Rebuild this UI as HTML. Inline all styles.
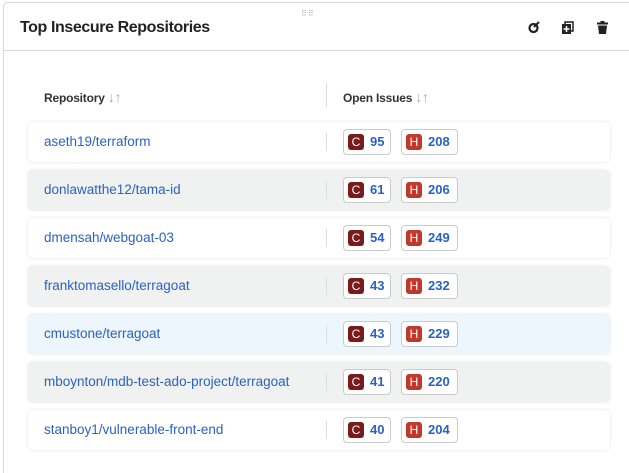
<!DOCTYPE html><html><head><style>
html,body{margin:0;width:629px;height:473px;overflow:hidden}
body{background:#fff;font-family:"Liberation Sans",sans-serif;position:relative}
.card{position:absolute;left:3px;top:2px;width:640px;height:480px;border:1px solid #d9d9d9;border-radius:4px;box-sizing:border-box}
.hdr{position:absolute;left:0;top:0;right:0;height:47px;border-bottom:1px solid #d9d9d9}
.title{position:absolute;left:16px;top:16px;font-size:16px;font-weight:bold;color:#222;letter-spacing:-0.4px}
.dots{position:absolute;color:#aaa;font-size:8px;letter-spacing:1px}
.th{position:absolute;top:89px;font-size:12px;font-weight:bold;color:#333;letter-spacing:-0.2px}
.th span{color:#aaa;font-weight:normal;font-size:14px}
.vline{position:absolute;left:326px;width:1px;background:#ddd}
.row{position:absolute;left:28px;width:582px;height:40px;border-radius:5px;box-shadow:0 0 3px rgba(0,0,0,.12);background:#fff}
.row.g{background:#f0f1f1}.row.b{background:#edf5fd}
.row a{position:absolute;left:16px;top:12px;font-size:13.5px;color:#2a62c2;text-decoration:none}
.row .vl{position:absolute;left:298px;top:11px;width:1px;height:18px;background:#ddd}
.bd{position:absolute;top:7px;height:24px;border:1px solid #ccc;border-radius:4px;background:#fff;font-size:13px;font-weight:bold;color:#2a62c2;line-height:24px}
.bd i{position:absolute;left:4px;top:4px;width:16px;height:16px;border-radius:3px;color:#fff;font-style:normal;font-size:12px;line-height:16px;text-align:center;font-weight:normal}
.bd b{position:absolute;left:26px}
</style></head><body>
<div class="card"><div class="hdr"><div class="title">Top Insecure Repositories</div>
<div class="dots" style="left:297px;top:6px">⠿⠿</div>
<svg style="position:absolute;left:524px;top:18px" width="12" height="12" viewBox="0 0 12 12"><circle cx="5.5" cy="7" r="4" fill="none" stroke="#222" stroke-width="2.2"/><path d="M6 6L11 1" stroke="#222" stroke-width="2"/></svg>
<svg style="position:absolute;left:558px;top:18px" width="12" height="13" viewBox="0 0 12 13"><rect x="0" y="3" width="9" height="10" fill="#222"/><path d="M3 3V1h8v9H9" fill="none" stroke="#222" stroke-width="1.5"/><path d="M4.5 5v6M1.5 8h6" stroke="#fff" stroke-width="1.5"/></svg>
<svg style="position:absolute;left:593px;top:18px" width="11" height="13" viewBox="0 0 11 13"><rect x="0" y="1.5" width="11" height="2" fill="#222"/><rect x="3.5" y="0" width="4" height="2" fill="#222"/><path d="M1 4.5h9l-1 8.5H2z" fill="#222"/></svg>
</div></div>
<div class="th" style="left:44px">Repository <span>↓↑</span></div>
<div class="th" style="left:343px">Open Issues <span>↓↑</span></div>
<div class="vline" style="top:83px;height:24px"></div>
<div class="row" style="top:122px"><a>aseth19/terraform</a><div class="vl"></div><div class="bd" style="left:315px;width:46px"><i style="background:#7a1a1a">C</i><b>95</b></div><div class="bd" style="left:373px;width:55px"><i style="background:#c0392b">H</i><b>208</b></div></div>
<div class="row g" style="top:170px"><a>donlawatthe12/tama-id</a><div class="vl"></div><div class="bd" style="left:315px;width:46px"><i style="background:#7a1a1a">C</i><b>61</b></div><div class="bd" style="left:373px;width:55px"><i style="background:#c0392b">H</i><b>206</b></div></div>
<div class="row" style="top:218px"><a>dmensah/webgoat-03</a><div class="vl"></div><div class="bd" style="left:315px;width:46px"><i style="background:#7a1a1a">C</i><b>54</b></div><div class="bd" style="left:373px;width:55px"><i style="background:#c0392b">H</i><b>249</b></div></div>
<div class="row g" style="top:266px"><a>franktomasello/terragoat</a><div class="vl"></div><div class="bd" style="left:315px;width:46px"><i style="background:#7a1a1a">C</i><b>43</b></div><div class="bd" style="left:373px;width:55px"><i style="background:#c0392b">H</i><b>232</b></div></div>
<div class="row b" style="top:314px"><a>cmustone/terragoat</a><div class="vl"></div><div class="bd" style="left:315px;width:46px"><i style="background:#7a1a1a">C</i><b>43</b></div><div class="bd" style="left:373px;width:55px"><i style="background:#c0392b">H</i><b>229</b></div></div>
<div class="row g" style="top:362px"><a>mboynton/mdb-test-ado-project/terragoat</a><div class="vl"></div><div class="bd" style="left:315px;width:46px"><i style="background:#7a1a1a">C</i><b>41</b></div><div class="bd" style="left:373px;width:55px"><i style="background:#c0392b">H</i><b>220</b></div></div>
<div class="row" style="top:410px"><a>stanboy1/vulnerable-front-end</a><div class="vl"></div><div class="bd" style="left:315px;width:46px"><i style="background:#7a1a1a">C</i><b>40</b></div><div class="bd" style="left:373px;width:55px"><i style="background:#c0392b">H</i><b>204</b></div></div>
</body></html>
